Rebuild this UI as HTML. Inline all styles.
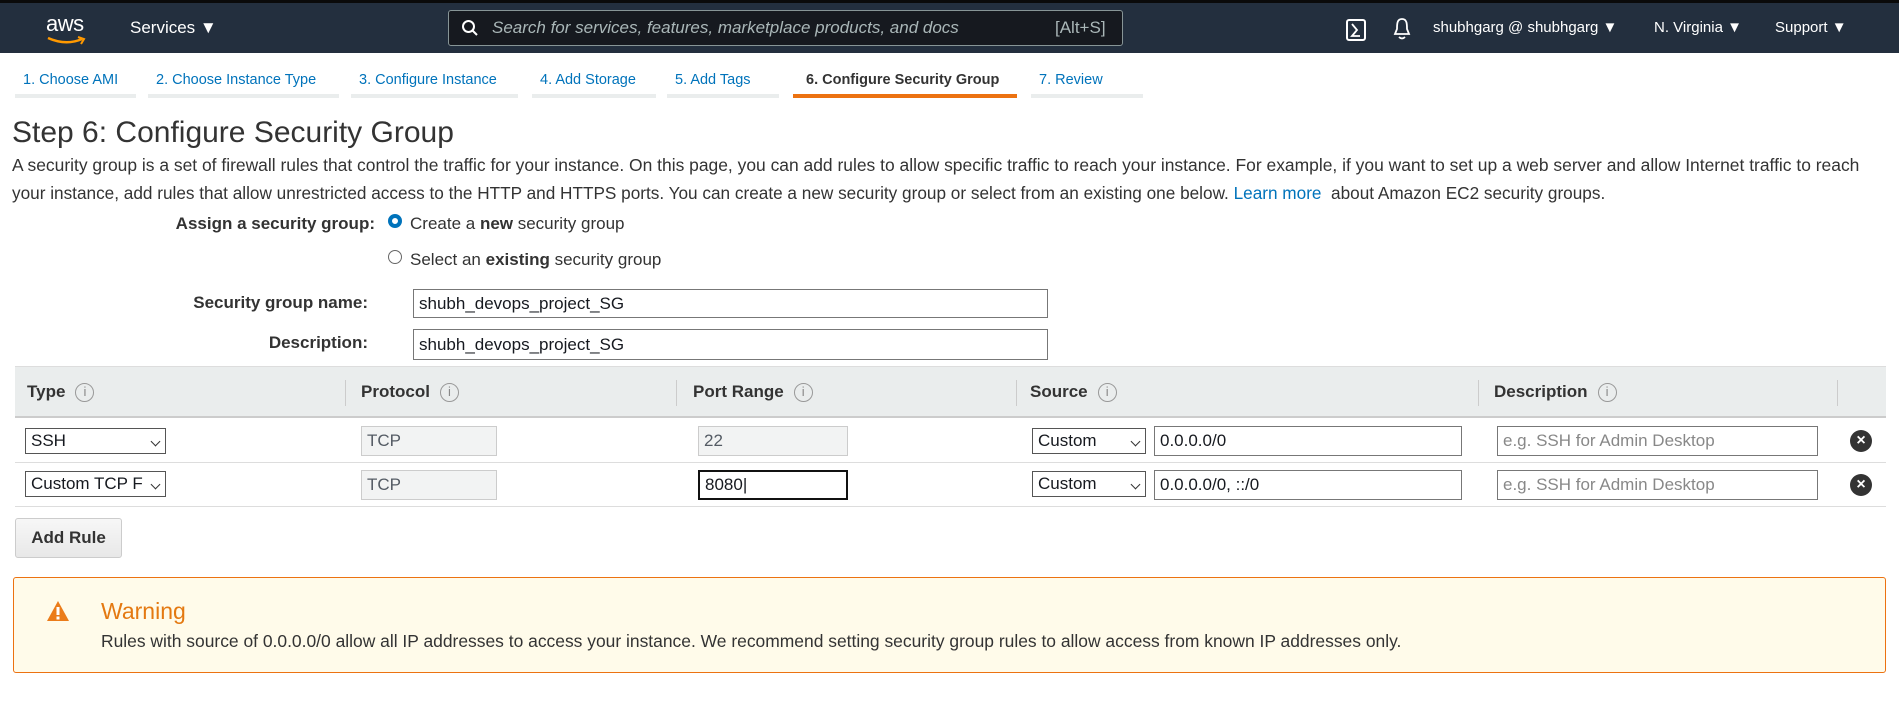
<!DOCTYPE html>
<html><head><meta charset="utf-8"><style>
*{box-sizing:border-box;margin:0;padding:0}
body{width:1899px;height:712px;background:#fff;font-family:"Liberation Sans",Arial,sans-serif;color:#16191f;position:relative;overflow:hidden}
.a{position:absolute;white-space:nowrap}
.nav{position:absolute;left:0;top:0;width:1899px;height:53px;background:#232f3e;border-top:3px solid #0a0a0a}
.nt{color:#fff;font-size:16px}
.tab{position:absolute;top:70px;height:28px;font-size:14.5px;color:#0073bb;border-bottom:4px solid #eaeded;padding-left:8px;line-height:20px}
.inp{position:absolute;border:1px solid #777;background:#fff;font-size:17px;padding-left:5px;display:flex;align-items:center}
.ro{background:#f2f3f3;border-color:#ccc;color:#545b64}
.sel{position:absolute;border:1px solid #555;background:#fff;font-size:17px;padding-left:5px;display:flex;align-items:center}
.sel:after{content:"";position:absolute;right:6px;top:9px;width:6px;height:6px;border-right:1.5px solid #333;border-bottom:1.5px solid #333;transform:rotate(45deg)}
.th{position:absolute;top:382px;font-size:17px;font-weight:bold;color:#333}
.info{display:inline-block;width:19px;height:19px;border:1.5px solid #999;border-radius:50%;text-align:center;font-size:13px;line-height:16px;color:#888;font-weight:normal;margin-left:10px;vertical-align:1px}
.sep{position:absolute;top:380px;width:1px;height:26px;background:#ccc}
.lbl{position:absolute;font-size:17px;font-weight:bold;text-align:right;color:#333}
.x{position:absolute;width:22px;height:22px;border-radius:50%;background:#333;color:#fff;font-size:16px;font-weight:bold;text-align:center;line-height:22px}
</style></head><body>
<div class="nav">
<div class="a" style="left:46px;top:8px;color:#fff;font-size:22px;letter-spacing:-.5px">aws</div>
<svg class="a" style="left:46px;top:33px" width="42" height="10"><path d="M2 2 Q20 10 36 3" stroke="#ff9900" stroke-width="2.5" fill="none"/><path d="M32 1 L38 3 L35 8" stroke="#ff9900" stroke-width="2" fill="none"/></svg>
<div class="a nt" style="left:130px;top:15px;font-size:17px">Services ▼</div>
<div class="a" style="left:448px;top:7px;width:675px;height:36px;border:1px solid #879596;border-radius:3px;background:#16191f"></div>
<svg class="a" style="left:461px;top:16px" width="18" height="18"><circle cx="7.5" cy="7.5" r="5.5" stroke="#fff" stroke-width="2" fill="none"/><path d="M11.5 11.5 L16 16" stroke="#fff" stroke-width="2"/></svg>
<div class="a" style="left:492px;top:15px;color:#aab7b8;font-size:17px;font-style:italic">Search for services, features, marketplace products, and docs</div>
<div class="a" style="left:1055px;top:15px;color:#aab7b8;font-size:17px">[Alt+S]</div>
<svg class="a" style="left:1346px;top:16px" width="20" height="22"><rect x="1" y="1" width="18" height="20" rx="2" stroke="#fff" stroke-width="2" fill="none"/><path d="M6 5 L11 11 L6 17 L14 17" stroke="#fff" stroke-width="1.8" fill="none"/></svg>
<svg class="a" style="left:1392px;top:14px" width="20" height="24"><path d="M10 2 C5 2 5 7 5 12 L3 17 L17 17 L15 12 C15 7 15 2 10 2Z" stroke="#fff" stroke-width="1.8" fill="none"/><path d="M7 20 Q10 23 13 20" stroke="#fff" stroke-width="1.8" fill="none"/></svg>
<div class="a nt" style="left:1433px;top:16px;font-size:15px">shubhgarg @ shubhgarg ▼</div>
<div class="a nt" style="left:1654px;top:16px;font-size:15px">N. Virginia ▼</div>
<div class="a nt" style="left:1775px;top:16px;font-size:15px">Support ▼</div>
</div>
<div class="tab" style="left:15px;width:121px">1. Choose AMI</div>
<div class="tab" style="left:148px;width:191px">2. Choose Instance Type</div>
<div class="tab" style="left:351px;width:167px">3. Configure Instance</div>
<div class="tab" style="left:532px;width:124px">4. Add Storage</div>
<div class="tab" style="left:667px;width:112px">5. Add Tags</div>
<div class="tab" style="left:793px;width:224px;color:#333;font-weight:bold;border-bottom-color:#ec7211;padding-left:13px">6. Configure Security Group</div>
<div class="tab" style="left:1031px;width:112px">7. Review</div>
<div class="a" style="left:12px;top:116px;font-size:30px;color:#333">Step 6: Configure Security Group</div>
<div class="a" style="left:12px;top:151px;font-size:17.45px;line-height:28px;color:#333">A security group is a set of firewall rules that control the traffic for your instance. On this page, you can add rules to allow specific traffic to reach your instance. For example, if you want to set up a web server and allow Internet traffic to reach</div>
<div class="a" style="left:12px;top:179px;font-size:17.2px;line-height:28px;color:#333">your instance, add rules that allow unrestricted access to the HTTP and HTTPS ports. You can create a new security group or select from an existing one below. <span style="color:#0073bb">Learn more</span>&nbsp; about Amazon EC2 security groups.</div>
<div class="lbl" style="left:100px;width:275px;top:214px">Assign a security group:</div>
<div class="a" style="left:388px;top:214px;width:14px;height:14px;border-radius:50%;border:4px solid #0073bb;background:#fff"></div>
<div class="a" style="left:410px;top:214px;font-size:17px;color:#333">Create a <b>new</b> security group</div>
<div class="a" style="left:388px;top:250px;width:14px;height:14px;border-radius:50%;border:1px solid #666;background:#fff"></div>
<div class="a" style="left:410px;top:250px;font-size:17px;color:#333">Select an <b>existing</b> security group</div>
<div class="lbl" style="left:100px;width:268px;top:293px">Security group name:</div>
<div class="inp" style="left:413px;top:289px;width:635px;height:29px">shubh_devops_project_SG</div>
<div class="lbl" style="left:100px;width:268px;top:333px">Description:</div>
<div class="inp" style="left:413px;top:329px;width:635px;height:31px">shubh_devops_project_SG</div>
<div class="a" style="left:15px;top:366px;width:1871px;height:52px;background:#eaeded;border-top:1px solid #ddd;border-bottom:2px solid #ccc"></div>
<div class="th" style="left:27px">Type<span class="info">i</span></div>
<div class="th" style="left:361px">Protocol<span class="info">i</span></div>
<div class="th" style="left:693px">Port Range<span class="info">i</span></div>
<div class="th" style="left:1030px">Source<span class="info">i</span></div>
<div class="th" style="left:1494px">Description<span class="info">i</span></div>
<div class="sep" style="left:345px"></div><div class="sep" style="left:676px"></div><div class="sep" style="left:1016px"></div><div class="sep" style="left:1478px"></div><div class="sep" style="left:1837px"></div>
<div class="a" style="left:15px;top:462px;width:1871px;height:1px;background:#ddd"></div>
<div class="a" style="left:15px;top:506px;width:1871px;height:1px;background:#ddd"></div>
<div class="sel" style="left:25px;top:428px;width:141px;height:26px">SSH</div>
<div class="inp ro" style="left:361px;top:426px;width:136px;height:30px">TCP</div>
<div class="inp ro" style="left:698px;top:426px;width:150px;height:30px">22</div>
<div class="sel" style="left:1032px;top:428px;width:114px;height:26px">Custom</div>
<div class="inp" style="left:1154px;top:426px;width:308px;height:30px">0.0.0.0/0</div>
<div class="inp" style="left:1497px;top:426px;width:321px;height:30px;color:#888">e.g. SSH for Admin Desktop</div>
<div class="x" style="left:1850px;top:430px">×</div>
<div class="sel" style="left:25px;top:471px;width:141px;height:26px">Custom TCP F</div>
<div class="inp ro" style="left:361px;top:470px;width:136px;height:30px">TCP</div>
<div class="inp" style="left:698px;top:470px;width:150px;height:30px;border:2px solid #111">8080|</div>
<div class="sel" style="left:1032px;top:471px;width:114px;height:26px">Custom</div>
<div class="inp" style="left:1154px;top:470px;width:308px;height:30px">0.0.0.0/0, ::/0</div>
<div class="inp" style="left:1497px;top:470px;width:321px;height:30px;color:#888">e.g. SSH for Admin Desktop</div>
<div class="x" style="left:1850px;top:474px">×</div>
<div class="a" style="left:15px;top:518px;width:107px;height:40px;border:1px solid #ccc;border-radius:3px;background:linear-gradient(#f7f7f7,#e8e8e8);font-size:17px;font-weight:bold;color:#333;text-align:center;line-height:38px">Add Rule</div>
<div class="a" style="left:13px;top:577px;width:1873px;height:96px;background:#fffbea;border:1px solid #ec7211;border-radius:3px"></div>
<svg class="a" style="left:46px;top:600px" width="24" height="22"><path d="M12 1 L23 21 L1 21Z" fill="#eb7c1a"/><rect x="10.5" y="7" width="3" height="8" fill="#fff"/><rect x="10.5" y="16.5" width="3" height="3" fill="#fff"/></svg>
<div class="a" style="left:101px;top:598px;font-size:23px;color:#e47911">Warning</div>
<div class="a" style="left:101px;top:631px;font-size:17.45px;color:#333">Rules with source of 0.0.0.0/0 allow all IP addresses to access your instance. We recommend setting security group rules to allow access from known IP addresses only.</div>
</body></html>
